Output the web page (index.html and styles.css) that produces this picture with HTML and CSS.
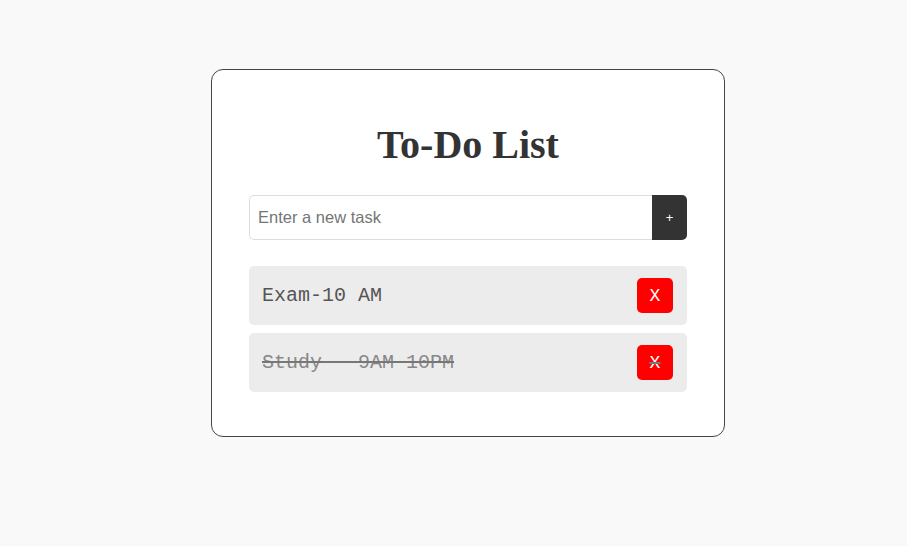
FILE: index.html
```html
<!DOCTYPE html>
<html lang="en">
<head>
<meta charset="utf-8">
<title>To-Do List</title>
<link rel="stylesheet" href="styles.css">
</head>
<body>
<div class="page">
  <div class="card">
    <h1 class="title">To-Do List</h1>
    <div class="add-row">
      <input class="task-input" type="text" placeholder="Enter a new task">
      <button class="add-btn">+</button>
    </div>
    <ul class="task-list">
      <li class="task">
        <span class="task-text">Exam-10 AM</span>
        <button class="del-btn">X</button>
      </li>
      <li class="task done">
        <span class="task-text">Study - 9AM-10PM</span>
        <button class="del-btn">X</button>
      </li>
    </ul>
  </div>
</div>
</body>
</html>
```

FILE: styles.css
```css
html, body {
  margin: 0;
  padding: 0;
  background: #f9f9f9;
}

.page {
  display: flex;
  justify-content: center;
  padding: 69px 0 0 29px;
}

.card {
  width: 438px;
  padding: 52px 37px 44px;
  background: #ffffff;
  border: 1px solid #444;
  border-radius: 12px;
}

.title {
  margin: 0 0 27px;
  text-align: center;
  font-family: "Liberation Serif", "Times New Roman", serif;
  font-size: 40px;
  font-weight: bold;
  color: #333;
  line-height: 46px;
}

.add-row {
  display: flex;
  height: 45px;
}

.task-input {
  flex: 1;
  min-width: 0;
  box-sizing: border-box;
  height: 45px;
  margin: 0;
  padding: 0 8px;
  border: 1px solid #ddd;
  border-right: none;
  border-radius: 5px 0 0 5px;
  font-family: "Liberation Sans", Arial, sans-serif;
  font-size: 16.5px;
  color: #333;
  outline: none;
}

.task-input::placeholder {
  color: #757575;
}

.add-btn {
  width: 35px;
  height: 45px;
  margin: 0;
  padding: 0;
  border: none;
  border-radius: 0 5px 5px 0;
  background: #333;
  color: #fff;
  font-family: "Liberation Sans", Arial, sans-serif;
  font-size: 13px;
}

.task-list {
  list-style: none;
  margin: 26px 0 0;
  padding: 0;
  display: flex;
  flex-direction: column;
  gap: 8px;
}

.task {
  display: flex;
  align-items: center;
  justify-content: space-between;
  height: 59px;
  padding: 0 14px 0 13px;
  background: #ececec;
  border-radius: 5px;
  font-family: "Liberation Mono", "Courier New", monospace;
  font-size: 20px;
  color: #555;
}

.task.done {
  color: #888;
  text-decoration: line-through;
  text-decoration-color: #777;
  text-decoration-thickness: 2px;
}

.del-btn {
  width: 36px;
  height: 35px;
  margin: 0;
  padding: 0;
  border: none;
  border-radius: 5px;
  background: #ff0000;
  color: #fff;
  font-family: "Liberation Mono", "Courier New", monospace;
  font-size: 18px;
  text-decoration: inherit;
}
```
